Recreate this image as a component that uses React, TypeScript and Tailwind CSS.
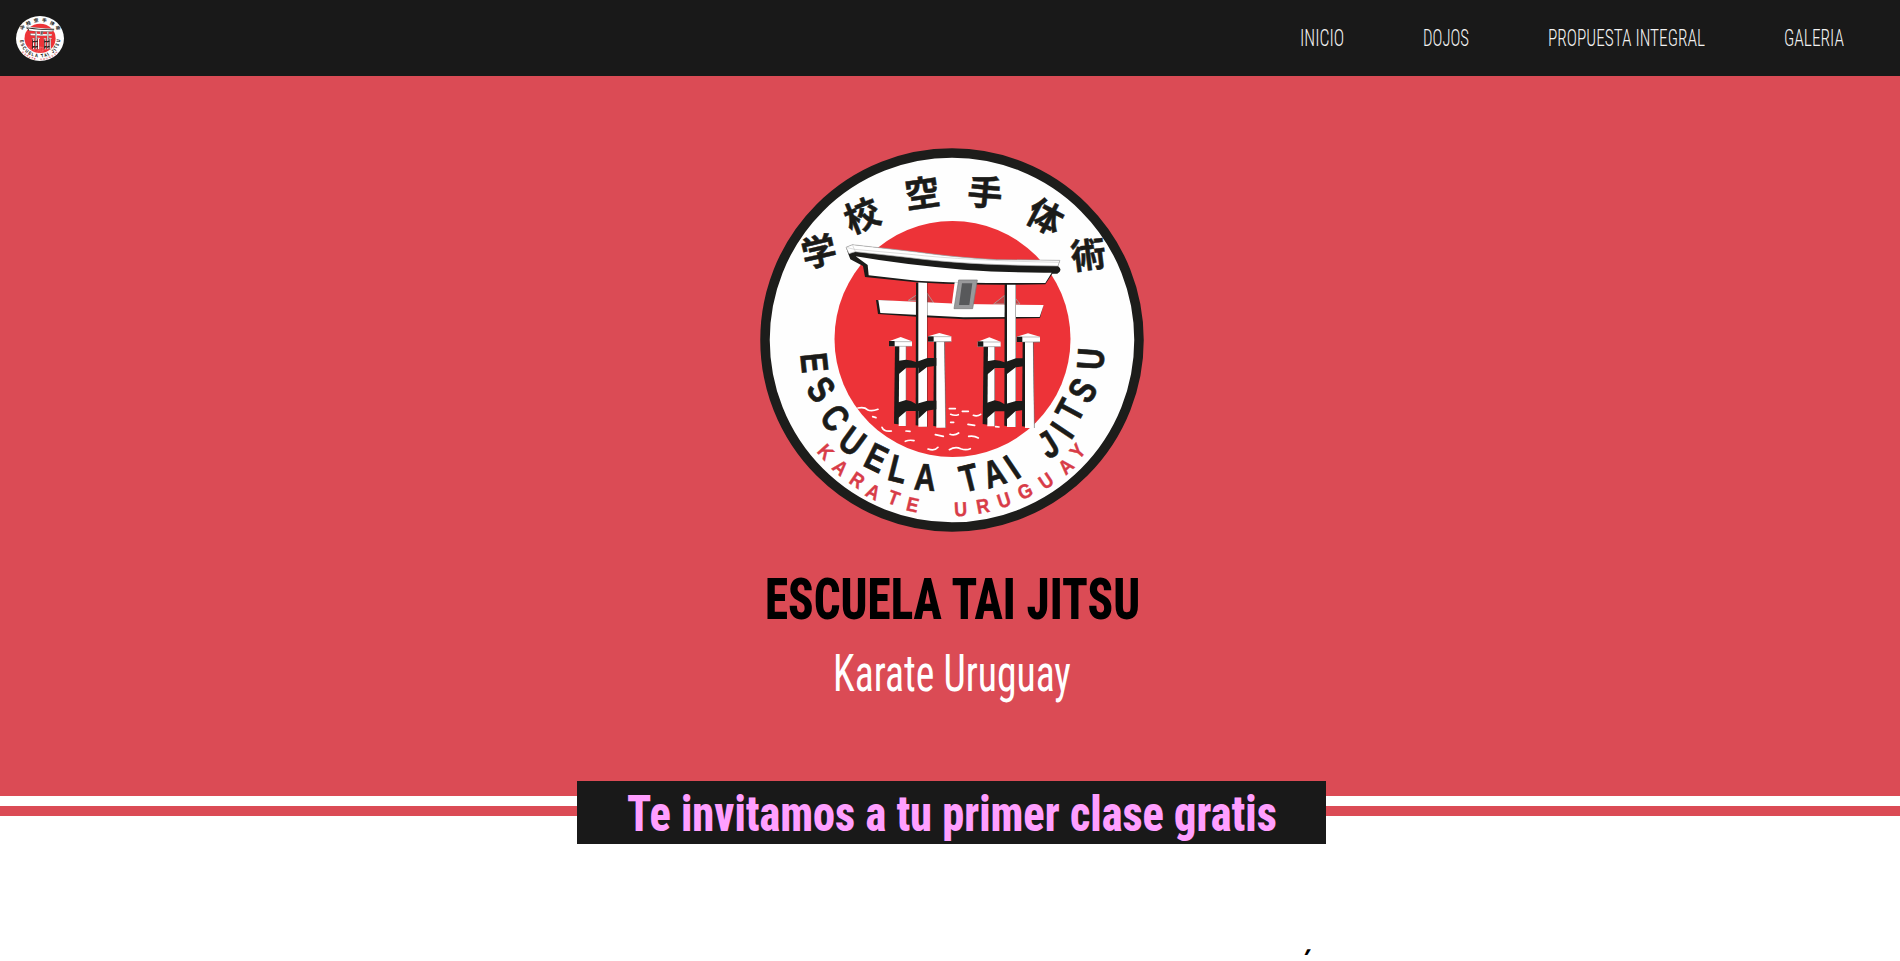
import { useLayoutEffect, useRef, useState } from "react";

type Glyph = [char: string, x: number, y: number, rotation?: number];

const CENTER_X = 952;
const CENTER_Y = 340;

const KANJI: Glyph[] = [
  ["学", 819, 251.7, -13],
  ["校", 862.3, 216, -22],
  ["空", 922.3, 193.5, -8],
  ["手", 985, 192.7, 5],
  ["体", 1045, 217, 28],
  ["術", 1088.3, 255, -7],
];

const SCHOOL: Glyph[] = [
  ["E", 815, 362.7, 84], ["S", 821.7, 389, 52], ["C", 835.7, 417.5, 52], ["U", 852.7, 440.7, 36],
  ["E", 876.7, 457.3, 26], ["L", 898.3, 468.3, 14], ["A", 925, 476.7, 4],
  ["T", 969, 477.3, -14], ["A", 994, 472.7, -18], ["I", 1011.7, 466.7, -34],
  ["J", 1048, 444, -32], ["I", 1061.7, 430, -56], ["T", 1069.5, 410, -62], ["S", 1082, 390, -60], ["U", 1090, 359, -86],
];

const COUNTRY: Glyph[] = [
  ["K", 826, 451.7], ["A", 840.7, 467.3], ["R", 857.3, 480], ["A", 873.3, 491.7],
  ["T", 894, 497.7], ["E", 912.7, 504.3],
  ["U", 960.7, 509], ["R", 982.7, 505.7], ["U", 1004, 500], ["G", 1025, 491],
  ["U", 1046, 480.7], ["A", 1065.7, 466], ["Y", 1077.3, 451],
];

function towardCenter(x: number, y: number) {
  return (Math.atan2(CENTER_X - x, y - CENTER_Y) * 180) / Math.PI;
}

function Letters({ glyphs, size, squeeze, className }: { glyphs: Glyph[]; size: number; squeeze: number; className: string }) {
  return (
    <g className={className} fontSize={size} textAnchor="middle">
      {glyphs.map(([char, x, y, rotation], i) => (
        <text key={i} y={size * 0.36} transform={`translate(${x} ${y}) rotate(${rotation ?? towardCenter(x, y)}) scale(${squeeze} 1)`}>
          {char}
        </text>
      ))}
    </g>
  );
}

function Pillars() {
  return (
    <g>
      {/* outer posts */}
      <path d="M195 348H228V586L192 581Z" fill="#1b1b19" />
      <path d="M208 348H228V588H206Z" fill="#fff" />
      <path d="M177 334L212 321L246 334V349H177Z" fill="#fff" />
      <path d="M177 333H194V349H177Z" fill="#1b1b19" />
      <path d="M194 335H246M194 349H246M228 349V588" stroke="#777" strokeWidth="1.5" fill="none" />
      {/* tall post */}
      <path d="M258 158H292V590L257 586Z" fill="#1b1b19" />
      <path d="M265 156H291V590H265Z" fill="#fff" />
      {/* front post */}
      <path d="M312 330H344L347 593L310 588Z" fill="#1b1b19" />
      <path d="M319 334H343L347 593H319Z" fill="#fff" />
      <path d="M294 319L328 309L364 319V335H294Z" fill="#fff" />
      <path d="M294 319H311V335H294Z" fill="#1b1b19" />
      <path d="M311 320H364M311 335H364L344 336L347 593" stroke="#777" strokeWidth="1.5" fill="none" />
      {/* bindings */}
      <path d="M196 394L228 389Q244 390 258 396L292 384H319V407Q302 410 291 411L265 431V413H229L204 434Z" fill="#1b1b19" />
      <path d="M196 520L228 510Q244 512 258 522L292 512H319V538Q302 541 291 542L265 566V543H229L195 572Z" fill="#1b1b19" />
    </g>
  );
}

function Torii() {
  return (
    <g transform="translate(830 230) scale(.33333)">
      <path d="M235 211L264 192V211ZM291 189L312 220H291ZM491 222L524 196V222ZM550 197L570 222H550Z" fill="#c73d40" stroke="#ae9290" strokeWidth="3" />
      <path d="M138 210L144 252L260 260L405 268L630 264L640 225L400 226Z" fill="#1b1b19" />
      <path d="M145 210L400 222L641 225L629 261L400 262L151 249Z" fill="#fff" />
      <Pillars />
      <g transform="translate(266 1)"><Pillars /></g>
      <path d="M48 52L67 44L260 66Q390 84 500 89L690 91L684 108Q700 121 682 131H667L646 163Q400 167 258 157L105 141L99 108L61 88L55 72Z" fill="#1b1b19" />
      <path d="M48 52L67 44L260 66Q390 84 500 89L690 91L684 108Q400 105 240 83L76 65L57 71Z" fill="#fff" stroke="#aaa" strokeWidth="2" />
      <path d="M48 52L73 58L77 66M67 44L73 58L240 73Q410 92 688 97" fill="none" stroke="#bbb" strokeWidth="1.5" />
      <path d="M77 79Q220 104 400 119Q540 129 665 128L646 159Q400 161 261 152L116 136L113 105Z" fill="#fff" />
      <path d="M374 157H387L374 234L366 219Z" fill="#fff" />
      <path d="M386 150H442L428 236H372Z" fill="#99999b" stroke="#777" strokeWidth="2" />
      <path d="M396 160H427L418 225H387Z" fill="#58595b" />
      <g fill="none" stroke="#fff" strokeWidth="5" strokeLinecap="round">
        <path d="M84 534Q104 530 112 539Q124 545 144 538M128 560L138 563M156 592Q162 606 184 603M228 603L240 604M226 634Q238 629 252 632M316 614L340 619M294 657Q314 664 324 652M358 536H376M362 553Q374 558 385 554M397 544L415 544M430 556Q442 560 452 553M362 577H371M414 583L434 586M360 613Q374 618 386 609M416 619Q432 616 445 624M358 659Q376 648 392 656Q408 662 421 656M497 590L507 591" />
      </g>
    </g>
  );
}

function Emblem({ small = false }: { small?: boolean }) {
  return (
    <svg
      viewBox={small ? "770 158 364 364" : "760 148 384 384"}
      preserveAspectRatio="none"
      className={small ? "h-[45px] w-12" : "size-96"}
      role="img"
      aria-label="Escuela Tai Jitsu"
    >
      <circle cx="952" cy="340" r={small ? 182 : 187} fill="#fefefe" stroke={small ? "none" : "#1d1d1b"} strokeWidth="9.5" />
      <circle cx="952.5" cy="339" r="118" fill="#ed3338" />
      <Torii />
      <Letters glyphs={KANJI} size={35} squeeze={1} className="fill-[#1b1b19] stroke-[#1b1b19] stroke-[0.5] font-['Noto_Sans_CJK_JP',sans-serif] font-bold" />
      <Letters glyphs={SCHOOL} size={38} squeeze={0.78} className="fill-[#1b1b19] stroke-[#1b1b19] stroke-[0.7] font-['Liberation_Sans',sans-serif] font-bold" />
      <Letters glyphs={COUNTRY} size={20} squeeze={0.9} className="fill-[#d83c48] stroke-[#d83c48] stroke-[0.4] font-['Liberation_Sans',sans-serif] font-bold" />
    </svg>
  );
}

/** Condenses a single line of text horizontally so that it fills its box. */
function Condensed({ text, className }: { text: string; className: string }) {
  const box = useRef<HTMLSpanElement>(null);
  const line = useRef<HTMLSpanElement>(null);
  const [scale, setScale] = useState(1);
  useLayoutEffect(() => {
    if (box.current && line.current) setScale(box.current.clientWidth / line.current.offsetWidth);
  }, [text]);
  return (
    <span ref={box} className={`block ${className}`}>
      <span ref={line} className="inline-block origin-left whitespace-nowrap" style={{ transform: `scaleX(${scale})` }}>
        {text}
      </span>
    </span>
  );
}

const LINKS = [
  { text: "INICIO", width: "w-11" },
  { text: "DOJOS", width: "w-[46px]" },
  { text: "PROPUESTA INTEGRAL", width: "w-[157px]" },
  { text: "GALERIA", width: "w-[60px]" },
];

export default function App() {
  return (
    <div className="h-[961px] overflow-hidden bg-white font-[Roboto,sans-serif]">
      <header className="flex h-[76px] items-center justify-between bg-[#191919] pr-14 pl-4">
        <Emblem small />
        <nav className="flex gap-[79px] text-2xl leading-6 font-[350] text-[#f1f1f1] [font-stretch:75%]">
          {LINKS.map((link) => (
            <a key={link.text} href="#">
              <Condensed text={link.text} className={link.width} />
            </a>
          ))}
        </nav>
      </header>

      <main>
        <section className="flex h-[720px] flex-col items-center bg-[#db4b55] pt-[72px] pl-1">
          <Emblem />
          <h1 className="mt-[37px] text-[57.5px] leading-[62px] font-extrabold text-black [font-stretch:75%]">
            <Condensed text="ESCUELA TAI JITSU" className="w-[375px]" />
          </h1>
          <p className="mt-[15px] text-[52px] leading-[56px] font-[370] text-white [font-stretch:75%]">
            <Condensed text="Karate Uruguay" className="w-[238px]" />
          </p>
        </section>

        <div className="flex h-5 flex-col items-center border-t-10 border-white bg-[#db4b55]">
          <div className="relative -mt-[25px] ml-[3px] flex h-[63px] w-[749px] shrink-0 items-center justify-center bg-[#191919]">
            <h2 className="pt-0.5 text-[50px] leading-[54px] font-extrabold text-[#ff9fff] [font-stretch:75%]">
              <Condensed text="Te invitamos a tu primer clase gratis" className="w-[650px]" />
            </h2>
          </div>
        </div>

        <section className="flex justify-end pt-[129px] pr-[588px]">
          <span className="scale-x-60 text-[38px] leading-10 font-bold text-black italic">´</span>
        </section>
      </main>
    </div>
  );
}
